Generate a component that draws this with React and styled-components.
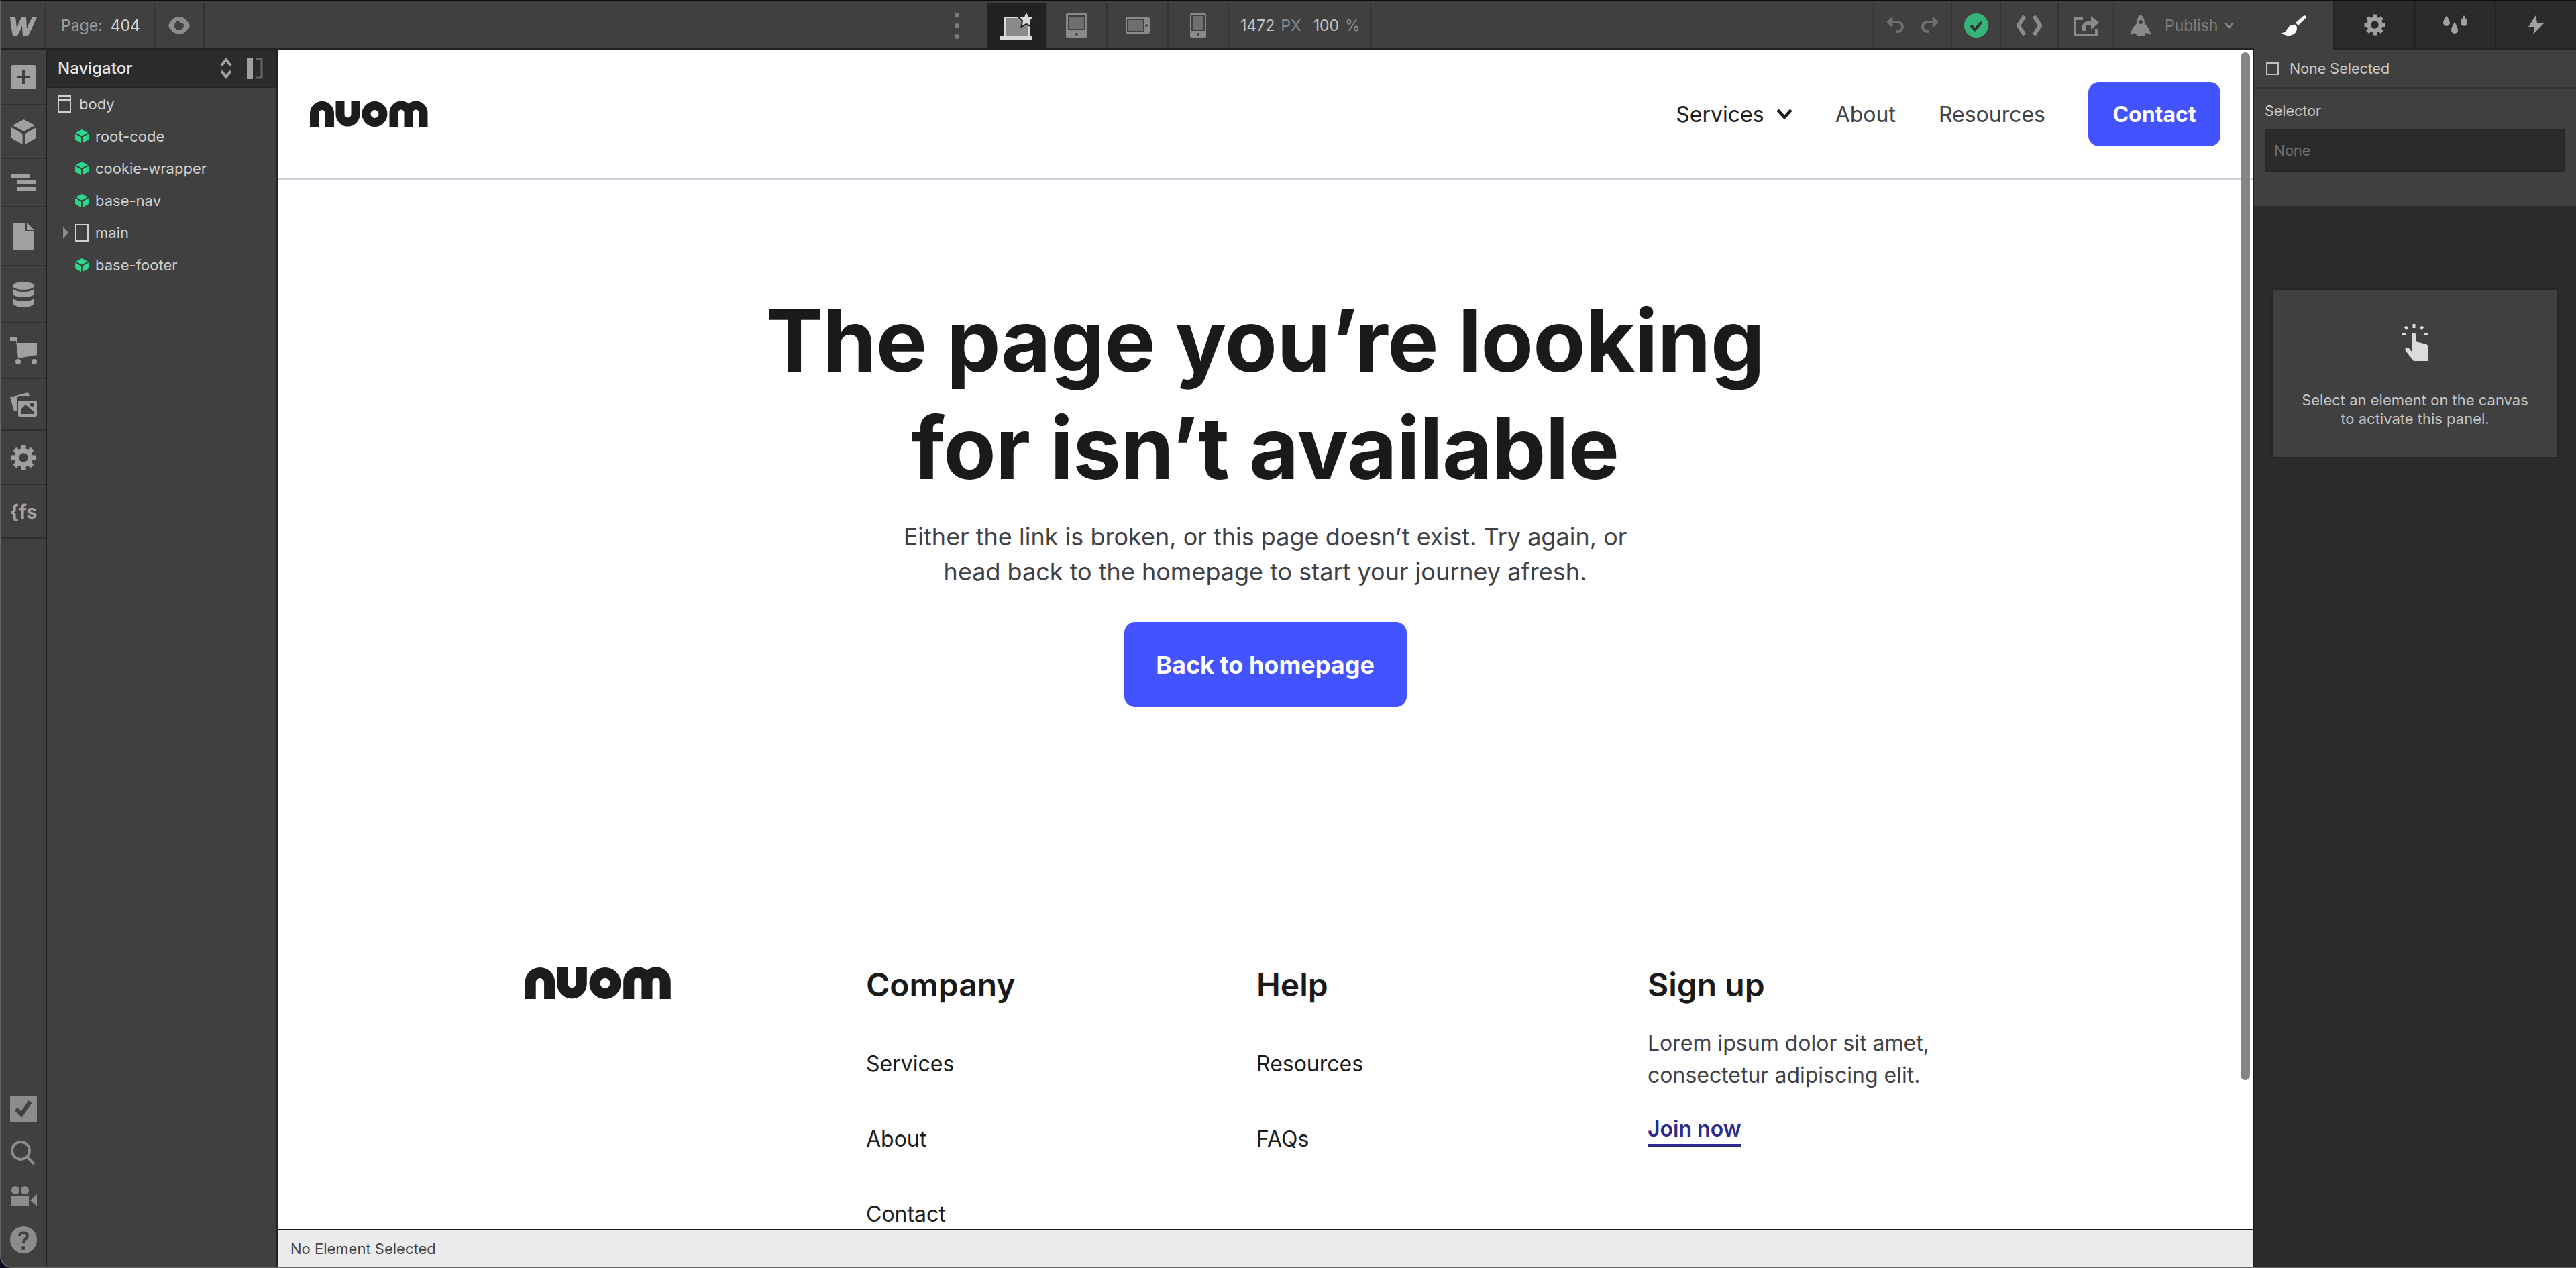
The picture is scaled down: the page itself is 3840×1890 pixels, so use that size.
import React from 'react';
import styled, { createGlobalStyle } from 'styled-components';

const GlobalStyle = createGlobalStyle`
  html, body {
    margin: 0;
    padding: 0;
    background: #0b0820;
    overflow: hidden;
  }
  * {
    box-sizing: border-box;
  }
`;

const GREY = '#a0a0a0';
const CUBE_GREEN = '#2bd98c';

const NuomLogo = ({ width, height }) => (
  <svg width={width} height={height} viewBox='0 0 176 38' fill='none' stroke='#1c1c1c'>
    <g strokeWidth='13'>
      <path d='M6.5 38V18a11.5 11.5 0 0 1 23 0v20' />
      <path d='M45 0v19.5a11.5 11.5 0 0 0 23 0V0' />
      <circle cx='96.5' cy='19' r='12.5' />
      <path d='M125 38V17a11 11 0 0 1 22 0v21M147 17a11 11 0 0 1 22 0v21' />
    </g>
  </svg>
);

const WebflowMark = () => (
  <svg width='40' height='30' viewBox='0 0 40 30' fill={GREY}>
    <path d='M0 3h8c1 6 1.500 11 2 17 2-6 4-12 7-17h7c.5 6 .5 12 1 17 2-6 5-12 8-17h7c-4 8-8 18-13 27h-8c-.5-5-1-10-1-15-2 5-4 10-7 15H4C2 21 1 12 0 3z' />
  </svg>
);

const GearIcon = ({ size, color = GREY }) => (
  <svg width={size} height={size} viewBox='0 0 32 32' fill={color}>
    {[0, 45, 90, 135, 180, 225, 270, 315].map((a) => (
      <rect key={a} x='13' y='0.5' width='6' height='8' transform={`rotate(${a} 16 16)`} />
    ))}
    <circle cx='16' cy='16' r='8.700' fill='none' stroke={color} strokeWidth='6' />
  </svg>
);

const CubeIcon = ({ size, color }) => (
  <svg width={size} height={size} viewBox='0 0 20 20' fill={color}>
    <path d='M10 0l9 4.800-9 4.800-9-4.800z' />
    <path d='M0 6.500l9 5V20l-7.500-4L0 14.500z' />
    <path d='M20 6.500l-9 5V20l7.500-4 1.500-1.500z' />
  </svg>
);

const railIcons = {
  add: (
    <svg width='36' height='36' viewBox='0 0 36 36'>
      <rect width='36' height='36' rx='2' fill={GREY} />
      <path d='M18 8v20M8 18h20' stroke='#404040' strokeWidth='4' />
    </svg>
  ),
  cube: <CubeIcon size={37} color={GREY} />,
  navigator: (
    <svg width='38' height='26' viewBox='0 0 38 26' fill={GREY}>
      <rect width='28' height='6' />
      <rect x='10' y='10' width='28' height='6' />
      <rect x='10' y='20' width='28' height='6' />
    </svg>
  ),
  page: (
    <svg width='32' height='40' viewBox='0 0 32 40' fill={GREY}>
      <path d='M0 2a2 2 0 0 1 2-2h17v13h13v25a2 2 0 0 1-2 2H2a2 2 0 0 1-2-2z' />
      <path d='M21 0l11 11H21z' />
    </svg>
  ),
  database: (
    <svg width='32' height='38' viewBox='0 0 32 38' fill={GREY}>
      <ellipse cx='16' cy='6' rx='16' ry='6' />
      <path d='M0 10c3 4 10 5 16 5s13-1 16-5v7c0 4-8 6-16 6S0 21 0 17z' />
      <path d='M0 24c3 4 10 5 16 5s13-1 16-5v7c0 4-8 7-16 7S0 35 0 31z' />
    </svg>
  ),
  cart: (
    <svg width='40' height='40' viewBox='0 0 40 40' fill={GREY}>
      <path d='M0 0h10l1 8 29 0v18l-28 5-3-26H0z' />
      <circle cx='12' cy='36' r='4' />
      <circle cx='36' cy='36' r='4' />
    </svg>
  ),
  assets: (
    <svg width='40' height='36' viewBox='0 0 40 36'>
      <path d='M0 7L27 0l2 5H14a3 3 0 0 0-3 3v20H6z' fill={GREY} />
      <rect x='12' y='12' width='28' height='24' rx='2' fill={GREY} />
      <path d='M16 32V25l7-7 13 11v3z' fill='#404040' />
      <circle cx='33' cy='18' r='3' fill='#404040' />
    </svg>
  ),
  todo: (
    <svg width='40' height='40' viewBox='0 0 40 40'>
      <rect width='40' height='40' rx='3' fill='#8c8c8c' />
      <path d='M9 20l8 8L30 9' fill='none' stroke='#404040' strokeWidth='6' />
    </svg>
  ),
  search: (
    <svg width='38' height='36' viewBox='0 0 38 36' fill='none' stroke='#8c8c8c' strokeWidth='4'>
      <circle cx='15' cy='15' r='13' />
      <path d='M25 25l10 10' />
    </svg>
  ),
  video: (
    <svg width='40' height='30' viewBox='0 0 40 30' fill='#8c8c8c'>
      <circle cx='8' cy='6' r='6' />
      <circle cx='22' cy='6' r='6' />
      <rect x='2' y='14' width='26' height='16' rx='1' />
      <path d='M30 21L40 12v18z' />
    </svg>
  ),
  help: (
    <svg width='40' height='40' viewBox='0 0 40 40'>
      <circle cx='20' cy='20' r='20' fill='#8c8c8c' />
      <path d='M14 14c1-6 12-6 12 0 0 5-6 5-6 11' fill='none' stroke='#404040' strokeWidth='4' />
      <circle cx='20' cy='32' r='3' fill='#404040' />
    </svg>
  ),
};

const DeviceIcon = ({ width, height, inset, bottom, right }) => (
  <svg width={width} height={height} viewBox={`0 0 ${width} ${height}`}>
    <rect width={width} height={height} rx='2' fill='#8a8a8a' />
    <rect x={inset} y={inset} width={width - inset * 2 - (right || 0)} height={height - inset * 2 - (bottom || 0)} fill='#6f6f6f' stroke='#404040' strokeWidth='2' />
    {bottom ? <circle cx={width / 2} cy={height - 5} r='2' fill='#404040' /> : null}
    {right ? <circle cx={width - 5} cy={height / 2} r='2' fill='#404040' /> : null}
  </svg>
);

const LaptopIcon = () => (
  <svg width='50' height='44' viewBox='0 0 50 44'>
    <rect x='7' y='10' width='36' height='28' fill='#8a8a8a' stroke='#d9d9d9' strokeWidth='2' />
    <rect x='0' y='37' width='48' height='7' rx='1' fill='#d9d9d9' />
    <path d='M39 0l3.500 8 8.500 1-6 6 1.500 9-7.500-4-7.500 4 1.500-9-6-6 8.500-1z' fill='#d9d9d9' stroke='#222' strokeWidth='2' />
  </svg>
);

const Shell = styled.div`
  width: 3840px;
  height: 1890px;
  display: grid;
  grid-template-columns: 3358px 480px;
  background: #404040;
  font-family: Inter, 'Noto Sans', sans-serif;
  border-top: 2px solid #0c0c0c;
  border-bottom: 2px solid #636363;
  border-left: 2px solid #666;
  border-bottom-left-radius: 18px;
  overflow: hidden;
`;

const LeftSide = styled.div`
  display: flex;
  flex-direction: column;
  min-width: 0;
  min-height: 0;
`;

const TopBar = styled.header`
  height: 72px;
  flex: none;
  display: flex;
  background: #404040;
  border-bottom: 2px solid #222;
  padding-top: 2px;
`;

const Cell = styled.div`
  flex: ${(p) => (p.$grow ? '1' : 'none')};
  width: ${(p) => p.$w}px;
  display: flex;
  align-items: center;
  justify-content: ${(p) => p.$justify || 'center'};
  gap: ${(p) => p.$gap || 0}px;
  padding-left: ${(p) => p.$pad || 0}px;
  background: ${(p) => (p.$active ? '#222' : 'transparent')};
  border-right: ${(p) => (p.$plain ? 'none' : '2px solid #333')};
`;

const BarLabel = styled.span`
  font-size: 23px;
  color: ${(p) => p.$color || '#9c9c9c'};
  margin-left: ${(p) => p.$ml || 0}px;
`;

const Dots = styled.div`
  display: flex;
  flex-direction: column;
  gap: 9px;
  span {
    width: 7px;
    height: 7px;
    border-radius: 50%;
    background: #7d7d7d;
  }
`;

const Workspace = styled.div`
  flex: 1;
  min-height: 0;
  display: grid;
  grid-template-columns: 68px 344px 1fr;
`;

const Rail = styled.nav`
  display: flex;
  flex-direction: column;
  border-right: 2px solid #1f1f1f;
  background: #404040;
`;

const RailButton = styled.div`
  height: ${(p) => p.$h}px;
  flex: none;
  display: flex;
  align-items: center;
  justify-content: center;
  border-bottom: 2px solid #2f2f2f;
  color: ${GREY};
  font-size: 29px;
  font-weight: 700;
`;

const RailBottom = styled.div`
  margin-top: auto;
  padding-bottom: 8px;
  display: flex;
  flex-direction: column;
`;

const RailFoot = styled.div`
  height: 65px;
  display: flex;
  align-items: center;
  justify-content: center;
`;

const Navigator = styled.aside`
  background: #404040;
  border-right: 2px solid #222;
`;

const NavigatorHead = styled.div`
  height: 57px;
  display: flex;
  align-items: center;
  padding: 0 20px 0 16px;
  background: #2b2b2b;
  border-bottom: 2px solid #222;
  color: #e6e6e6;
  font-size: 24px;
  font-weight: 500;
  span {
    flex: 1;
  }
  svg + svg {
    margin-left: 22px;
  }
`;

const TreeRow = styled.div`
  height: 48px;
  display: flex;
  align-items: center;
  gap: ${(p) => p.$gap || 10}px;
  padding-left: ${(p) => p.$indent}px;
  color: #d0d0d0;
  font-size: 22px;
`;

const Canvas = styled.main`
  display: flex;
  flex-direction: column;
  min-width: 0;
  min-height: 0;
  border-right: 2px solid #1c1c1c;
`;

const Viewport = styled.div`
  flex: 1;
  min-height: 0;
  overflow: hidden;
  position: relative;
  background: #fff;
`;

const Scrollbar = styled.div`
  position: absolute;
  top: 4px;
  right: 4px;
  width: 14px;
  height: 1532px;
  border-radius: 7px;
  background: #858585;
`;

const PageNav = styled.div`
  height: 194px;
  display: flex;
  align-items: center;
  padding: 0 48px;
  border-bottom: 2px solid #d1d1db;
`;

const NavLinks = styled.div`
  margin-left: auto;
  display: flex;
  align-items: center;
  gap: 64px;
`;

const NavLink = styled.span`
  display: flex;
  align-items: center;
  gap: 18px;
  font-size: 32px;
  color: ${(p) => (p.$strong ? '#1c1c1c' : '#3f3f46')};
`;

const PrimaryButton = styled.span`
  display: flex;
  align-items: center;
  justify-content: center;
  width: ${(p) => p.$w}px;
  height: ${(p) => p.$h}px;
  background: #4353ff;
  border-radius: 16px;
  color: #fff;
  font-size: ${(p) => p.$size}px;
  font-weight: 700;
`;

const Hero = styled.section`
  display: flex;
  flex-direction: column;
  align-items: center;
  text-align: center;
  padding-top: 160px;
`;

const Title = styled.h1`
  margin: 0;
  font-size: 128px;
  line-height: 160px;
  font-weight: 700;
  letter-spacing: -0.64px;
  color: #1a1a1a;
`;

const Lead = styled.p`
  margin: 26px 0 49px;
  font-size: 36px;
  line-height: 52px;
  color: #3f3f46;
`;

const Footer = styled.footer`
  display: grid;
  grid-template-columns: 510px 582px 583px 1fr;
  margin-top: 384px;
  padding-left: 367px;
`;

const FooterCol = styled.div`
  display: flex;
  flex-direction: column;
  align-items: flex-start;
  padding-top: ${(p) => p.$top || 0}px;
`;

const FooterTitle = styled.h3`
  margin: 0 0 64px;
  font-size: 48px;
  line-height: 60px;
  font-weight: 600;
  color: #1a1a1a;
`;

const FooterLink = styled.span`
  font-size: 32px;
  line-height: 48px;
  height: 112px;
  color: #1a1a1a;
`;

const FooterText = styled.p`
  margin: -31px 0 0;
  font-size: 32px;
  line-height: 48px;
  color: #3f3f46;
`;

const JoinLink = styled.span`
  margin-top: 34px;
  font-size: 32px;
  line-height: 44px;
  font-weight: 600;
  color: #2d2a8c;
  border-bottom: 4px solid #2d2a8c;
`;

const StatusBar = styled.div`
  height: 56px;
  flex: none;
  display: flex;
  align-items: center;
  padding-left: 19px;
  background: #ebebeb;
  border-top: 2px solid #1c1c1c;
  color: #444;
  font-size: 22px;
`;

const RightPanel = styled.aside`
  display: flex;
  flex-direction: column;
  background: #2b2b2b;
  min-height: 0;
`;

const Tabs = styled.div`
  height: 72px;
  flex: none;
  display: grid;
  grid-template-columns: 118px 121px 120px 1fr;
`;

const Tab = styled.div`
  display: flex;
  align-items: center;
  justify-content: center;
  background: ${(p) => (p.$active ? '#404040' : '#2b2b2b')};
  border-left: ${(p) => (p.$active ? 'none' : '2px solid #222')};
  border-bottom: ${(p) => (p.$active ? 'none' : '2px solid #222')};
`;

const SelectionRow = styled.div`
  height: 58px;
  flex: none;
  display: flex;
  align-items: center;
  gap: 16px;
  padding-left: 18px;
  background: #404040;
  border-bottom: 2px solid #333;
  color: #c8c8c8;
  font-size: 21.500px;
`;

const CheckBox = styled.i`
  width: 19px;
  height: 19px;
  border: 2px solid #c0c0c0;
`;

const SelectorBlock = styled.div`
  height: 175px;
  flex: none;
  padding: 20px 16px 0;
  background: #404040;
  color: #c8c8c8;
  font-size: 21.500px;
`;

const SelectorInput = styled.div`
  height: 64px;
  margin-top: 14px;
  display: flex;
  align-items: center;
  padding-left: 12px;
  background: #2b2b2b;
  border: 2px solid #262626;
  border-radius: 4px;
  color: #707070;
`;

const EmptyCard = styled.div`
  margin: 123px 26px 0;
  height: 253px;
  display: flex;
  flex-direction: column;
  align-items: center;
  padding-top: 50px;
  background: #404040;
  border: 2px solid #262626;
  border-radius: 4px;
  text-align: center;
  color: #c6c6c6;
  font-size: 22px;
  line-height: 28px;
  p {
    margin: 43px 0 0;
  }
`;

const navItems = [
  { label: 'root-code' },
  { label: 'cookie-wrapper' },
  { label: 'base-nav' },
];

const App = () => {
  return (
    <>
      <GlobalStyle />
      <Shell>
        <LeftSide>
          <TopBar>
            <Cell $w={67}><WebflowMark /></Cell>
            <Cell $w={162} $justify='flex-start' $pad={22}>
              <BarLabel>Page:</BarLabel>
              <BarLabel $color='#d4d4d4' $ml={12}>404</BarLabel>
            </Cell>
            <Cell $w={74}>
              <svg width='32' height='26' viewBox='0 0 32 26' fill='#8c8c8c'>
                <path fillRule='evenodd' d='M0 13C4 4 10 0 16 0s12 4 16 13c-4 9-10 13-16 13S4 22 0 13zm16-7a7 7 0 1 0 7 7c0-2-1-3-2-3-3 0-5-2-5-4z' />
              </svg>
            </Cell>
            <Cell $w={1077} $plain />
            <Cell $w={90} $justify='flex-start' $pad={41} $plain>
              <Dots><span /><span /><span /></Dots>
            </Cell>
            <Cell $w={89} $active><LaptopIcon /></Cell>
            <Cell $w={90}><DeviceIcon width={32} height={36} inset={4} bottom={8} /></Cell>
            <Cell $w={91}><DeviceIcon width={36} height={24} inset={3} right={6} /></Cell>
            <Cell $w={90}><DeviceIcon width={24} height={36} inset={3} bottom={8} /></Cell>
            <Cell $w={212} $justify='flex-start' $pad={17}>
              <BarLabel $color='#c4c4c4'>1472</BarLabel>
              <BarLabel $color='#8a8a8a' $ml={9}>PX</BarLabel>
              <BarLabel $color='#c4c4c4' $ml={18}>100</BarLabel>
              <BarLabel $color='#8a8a8a' $ml={9}>%</BarLabel>
            </Cell>
            <Cell $grow />
            <Cell $w={116} $gap={24}>
              <svg width='26' height='26' viewBox='0 0 26 26' fill='none' stroke='#6f6f6f' strokeWidth='4'>
                <path d='M8 2L2 8l6 6M2 8h14a7 7 0 0 1 0 14h-3' />
              </svg>
              <svg width='26' height='26' viewBox='0 0 26 26' fill='none' stroke='#6f6f6f' strokeWidth='4'>
                <path d='M18 2l6 6-6 6M24 8H10a7 7 0 0 0 0 14h3' />
              </svg>
            </Cell>
            <Cell $w={73}>
              <svg width='36' height='36' viewBox='0 0 36 36'>
                <circle cx='18' cy='18' r='18' fill='#35b378' />
                <path d='M10 18l6 6 10-11' fill='none' stroke='#333' strokeWidth='4' />
              </svg>
            </Cell>
            <Cell $w={86}>
              <svg width='40' height='30' viewBox='0 0 40 30' fill='none' stroke='#8a8a8a' strokeWidth='6'>
                <path d='M13 1L4 15l9 14M27 1l9 14-9 14' />
              </svg>
            </Cell>
            <Cell $w={83}>
              <svg width='38' height='32' viewBox='0 0 38 32'>
                <path d='M14 6H2v24h32v-9' fill='none' stroke='#8a8a8a' strokeWidth='4' />
                <path d='M13 24v-6a8 8 0 0 1 8-8h5V2l12 10-12 10v-7h-4a4 4 0 0 0-4 4v5z' fill='#8a8a8a' />
              </svg>
            </Cell>
            <Cell $w={208} $justify='flex-start' $gap={20} $pad={23} $plain>
              <svg width='32' height='32' viewBox='0 0 32 32'>
                <path d='M16 0c4 3 6 8 6 13l6 7 4 10-8-3-3 5H11l-3-5-8 3 4-10 6-7c0-5 2-10 6-13z' fill='#8a8a8a' />
                <circle cx='16' cy='11' r='3' fill='#404040' />
              </svg>
              <BarLabel $color='#7e7e7e'>Publish</BarLabel>
              <svg width='14' height='10' viewBox='0 0 14 10' fill='none' stroke='#8a8a8a' strokeWidth='2.500' style={{ marginLeft: -10 }}>
                <path d='M1 1l6 7 6-7' />
              </svg>
            </Cell>
          </TopBar>

          <Workspace>
            <Rail>
              <RailButton $h={83}>{railIcons.add}</RailButton>
              <RailButton $h={80}>{railIcons.cube}</RailButton>
              <RailButton $h={72}>{railIcons.navigator}</RailButton>
              <RailButton $h={88}>{railIcons.page}</RailButton>
              <RailButton $h={85}>{railIcons.database}</RailButton>
              <RailButton $h={83}>{railIcons.cart}</RailButton>
              <RailButton $h={77}>{railIcons.assets}</RailButton>
              <RailButton $h={81}><GearIcon size={38} /></RailButton>
              <RailButton $h={80}>{'{fs'}</RailButton>
              <RailBottom>
                <RailFoot>{railIcons.todo}</RailFoot>
                <RailFoot>{railIcons.search}</RailFoot>
                <RailFoot>{railIcons.video}</RailFoot>
                <RailFoot>{railIcons.help}</RailFoot>
              </RailBottom>
            </Rail>

            <Navigator>
              <NavigatorHead>
                <span>Navigator</span>
                <svg width='18' height='34' viewBox='0 0 18 34' fill='none' stroke={GREY} strokeWidth='4'>
                  <path d='M2 13l7-9 7 9M2 21l7 9 7-9' />
                </svg>
                <svg width='24' height='32' viewBox='0 0 24 32'>
                  <rect width='9' height='32' fill={GREY} />
                  <path d='M13 2h9v28h-9' fill='none' stroke='#666' strokeWidth='3' />
                </svg>
              </NavigatorHead>
              <TreeRow $indent={16} $gap={12}>
                <svg width='20' height='26' viewBox='0 0 20 26' fill='none' stroke='#d0d0d0' strokeWidth='2'>
                  <rect x='1' y='1' width='18' height='24' />
                  <path d='M1 7h18' />
                </svg>
                body
              </TreeRow>
              {navItems.map((item) => (
                <TreeRow key={item.label} $indent={42}>
                  <CubeIcon size={20} color={CUBE_GREEN} />
                  {item.label}
                </TreeRow>
              ))}
              <TreeRow $indent={24} $gap={10}>
                <svg width='8' height='18' viewBox='0 0 8 18' fill='#8a8a8a'>
                  <path d='M0 0l8 9-8 9z' />
                </svg>
                <svg width='20' height='26' viewBox='0 0 20 26' fill='none' stroke='#d0d0d0' strokeWidth='2'>
                  <rect x='1' y='1' width='18' height='24' />
                </svg>
                main
              </TreeRow>
              <TreeRow $indent={42}>
                <CubeIcon size={20} color={CUBE_GREEN} />
                base-footer
              </TreeRow>
            </Navigator>

            <Canvas>
              <Viewport>
                <PageNav>
                  <NuomLogo width={176} height={38} />
                  <NavLinks>
                    <NavLink $strong>
                      Services
                      <svg width='24' height='16' viewBox='0 0 24 16' fill='none' stroke='#1c1c1c' strokeWidth='4.500'>
                        <path d='M2 2l10 11L22 2' />
                      </svg>
                    </NavLink>
                    <NavLink>About</NavLink>
                    <NavLink>Resources</NavLink>
                    <PrimaryButton $w={197} $h={96} $size={32}>Contact</PrimaryButton>
                  </NavLinks>
                </PageNav>

                <Hero>
                  <Title>
                    The page you’re looking
                    <br />
                    for isn’t available
                  </Title>
                  <Lead>
                    Either the link is broken, or this page doesn’t exist. Try again, or
                    <br />
                    head back to the homepage to start your journey afresh.
                  </Lead>
                  <PrimaryButton $w={421} $h={127} $size={36}>Back to homepage</PrimaryButton>
                </Hero>

                <Footer>
                  <FooterCol $top={4}>
                    <NuomLogo width={221} height={47} />
                  </FooterCol>
                  <FooterCol>
                    <FooterTitle>Company</FooterTitle>
                    <FooterLink>Services</FooterLink>
                    <FooterLink>About</FooterLink>
                    <FooterLink>Contact</FooterLink>
                  </FooterCol>
                  <FooterCol>
                    <FooterTitle>Help</FooterTitle>
                    <FooterLink>Resources</FooterLink>
                    <FooterLink>FAQs</FooterLink>
                  </FooterCol>
                  <FooterCol>
                    <FooterTitle>Sign up</FooterTitle>
                    <FooterText>
                      Lorem ipsum dolor sit amet,
                      <br />
                      consectetur adipiscing elit.
                    </FooterText>
                    <JoinLink>Join now</JoinLink>
                  </FooterCol>
                </Footer>

                <Scrollbar />
              </Viewport>
              <StatusBar>No Element Selected</StatusBar>
            </Canvas>
          </Workspace>
        </LeftSide>

        <RightPanel>
          <Tabs>
            <Tab $active>
              <svg width='39' height='31' viewBox='0 0 39 31' fill='#fff'>
                <path d='M22 11L34 .5c2-1 4.500 1 3.500 3L26 15z' />
                <path d='M19 14c3-1 5 2 5 5 0 7-6 11-12 11-5 0-9-2-12-4 5 0 7-2 9-5 2-4 5-7 10-7z' />
              </svg>
            </Tab>
            <Tab><GearIcon size={32} /></Tab>
            <Tab>
              <svg width='36' height='28' viewBox='0 0 36 28' fill={GREY}>
                <path d='M5 0c3 5 5 8 5 11a5 5 0 0 1-10 0c0-3 2-6 5-11z' />
                <path d='M31 0c3 5 5 8 5 11a5 5 0 0 1-10 0c0-3 2-6 5-11z' />
                <path d='M17 10c3 5 5 8 5 12a5 5 0 0 1-10 0c0-4 2-7 5-12z' />
              </svg>
            </Tab>
            <Tab>
              <svg width='24' height='28' viewBox='0 0 24 28' fill={GREY}>
                <path d='M11 0L0 17h9l-2 11 17-17H13z' />
              </svg>
            </Tab>
          </Tabs>

          <SelectionRow>
            <CheckBox />
            None Selected
          </SelectionRow>
          <SelectorBlock>
            Selector
            <SelectorInput>None</SelectorInput>
          </SelectorBlock>

          <EmptyCard>
            <svg width='39' height='57' viewBox='0 0 39 57' fill='#dcdcdc'>
              <rect x='0' y='15' width='6' height='3' />
              <rect x='32' y='15' width='6' height='3' />
              <rect x='15.500' y='1' width='4' height='6' />
              <rect x='4' y='4' width='4' height='5' transform='rotate(-45 6 6.500)' />
              <rect x='27' y='4' width='4' height='5' transform='rotate(45 29 6.500)' />
              <path d='M14 17a3 3 0 0 1 6 0v10l16 4q2.500 1 2.500 4v21H17L5 41q-1.500-4 1-5 3-.5 5 2l3 4z' />
            </svg>
            <p>
              Select an element on the canvas
              <br />
              to activate this panel.
            </p>
          </EmptyCard>
        </RightPanel>
      </Shell>
    </>
  );
};

export default App;
